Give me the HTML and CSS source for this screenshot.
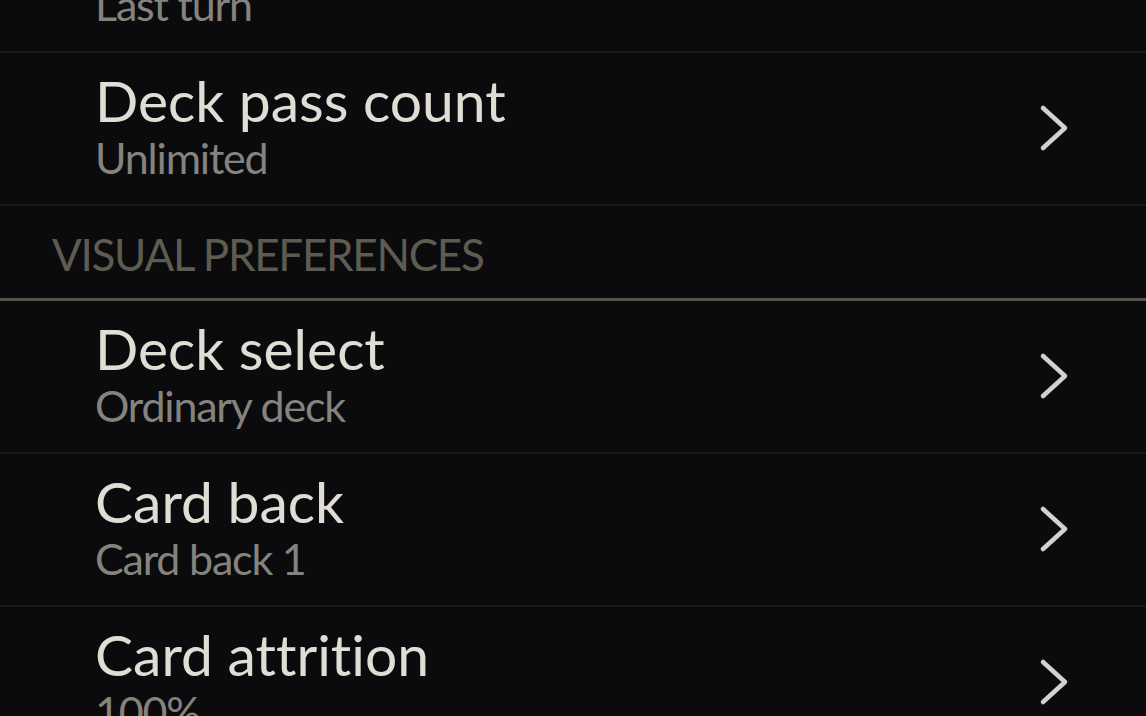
FILE: index.html
```html
<!DOCTYPE html>
<html>
<head>
<meta charset="utf-8">
<link rel="stylesheet" href="styles.css">
</head>
<body>
<div class="screen">
  <div class="list">
    <div class="row">
      <div class="text">
        <div class="title">Game end</div>
        <div class="sub">Last turn</div>
      </div>
      <svg class="chev" viewBox="0 0 32 50"><path d="M5 5 L27 25 L5 45"/></svg>
    </div>
    <div class="row">
      <div class="text">
        <div class="title">Deck pass count</div>
        <div class="sub">Unlimited</div>
      </div>
      <svg class="chev" viewBox="0 0 32 50"><path d="M5 5 L27 25 L5 45"/></svg>
    </div>
    <div class="section">VISUAL PREFERENCES</div>
    <div class="row">
      <div class="text">
        <div class="title">Deck select</div>
        <div class="sub">Ordinary deck</div>
      </div>
      <svg class="chev" viewBox="0 0 32 50"><path d="M5 5 L27 25 L5 45"/></svg>
    </div>
    <div class="row">
      <div class="text">
        <div class="title">Card back</div>
        <div class="sub">Card back 1</div>
      </div>
      <svg class="chev" viewBox="0 0 32 50"><path d="M5 5 L27 25 L5 45"/></svg>
    </div>
    <div class="row">
      <div class="text">
        <div class="title">Card attrition</div>
        <div class="sub">100%</div>
      </div>
      <svg class="chev" viewBox="0 0 32 50"><path d="M5 5 L27 25 L5 45"/></svg>
    </div>
  </div>
</div>
</body>
</html>
```

FILE: styles.css
```css
html, body {
  margin: 0;
  padding: 0;
  background: #0b0b0d;
  overflow: hidden;
}
.screen {
  width: 1146px;
  height: 716px;
  overflow: hidden;
  font-family: "Lato", "Open Sans", sans-serif;
  font-variant-ligatures: none;
}
.list {
  margin-top: -100px;
  display: flex;
  flex-direction: column;
}
.row {
  display: flex;
  align-items: center;
  justify-content: space-between;
  padding: 15px 76px 20px 95px;
  border-bottom: 2px solid #19191b;
}
.text {
  display: flex;
  flex-direction: column;
}
.title {
  font-size: 57px;
  line-height: 64px;
  color: #e0ddd5;
}
.sub {
  font-size: 43px;
  line-height: 52px;
  letter-spacing: -1.2px;
  color: #85837d;
}
.chev {
  width: 32px;
  height: 50px;
  margin-top: 4px;
  fill: none;
  stroke: #d2d2d2;
  stroke-width: 4.5;
  stroke-linecap: round;
  stroke-linejoin: round;
}
.section {
  padding: 22px 0 18px 52px;
  font-size: 44px;
  line-height: 52px;
  letter-spacing: -1.3px;
  color: #5e5b51;
  border-bottom: 3px solid #57544a;
}
```
